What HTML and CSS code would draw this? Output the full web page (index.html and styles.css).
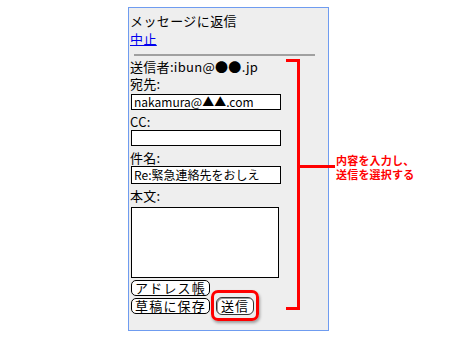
FILE: index.html
```html
<!DOCTYPE html>
<html lang="ja">
<head>
<meta charset="utf-8">
<link rel="stylesheet" href="styles.css">
</head>
<body>
<div class="stage">
  <div class="screen">
    <div class="title">メッセージに返信</div>
    <div class="line"><a class="link" href="#">中止</a></div>
    <div class="rule"></div>
    <div class="label">送信者:ibun@●●.jp</div>
    <div class="label">宛先:</div>
    <div class="field first">nakamura@▲▲.com</div>
    <div class="label">CC:</div>
    <div class="field"></div>
    <div class="label">件名:</div>
    <div class="field tall">Re:緊急連絡先をおしえ</div>
    <div class="label">本文:</div>
    <div class="area"></div>
    <div class="btnrow"><span class="btn">アドレス帳</span></div>
    <div class="btnrow second"><span class="btn">草稿に保存</span><span class="hl"><span class="btn send">送信</span></span></div>
  </div>
  <div class="bracket">
    <div class="tick top"></div>
    <div class="tick bottom"></div>
    <div class="arm"></div>
  </div>
  <div class="note">内容を入力し、<br>送信を選択する</div>
</div>
</body>
</html>
```
FILE: styles.css
```css
html, body { margin: 0; padding: 0; background: #fff; }
body { font-family: "Noto Sans CJK JP", "DejaVu Sans", sans-serif; }
.stage { position: relative; width: 450px; height: 340px; padding-top: 7px; box-sizing: border-box; }
.screen {
  margin-left: 128px;
  width: 198px;
  height: 318px;
  border: 1px solid #6f9cf0;
  background: #eeeeee;
  padding: 4px 0 0 1px;
  box-sizing: content-box;
  font-size: 13px;
  color: #000;
  overflow: hidden;
}
.title { height: 18px; line-height: 18px; letter-spacing: 0.4px; }
.line { height: 18px; line-height: 18px; }
.link { color: #0000ee; text-decoration: underline; letter-spacing: 0.4px; }
.rule { height: 2px; background: #a0a0a0; margin: 6px 13px 2px 4px; }
.label { height: 17px; line-height: 17px; letter-spacing: 0.3px; }
.field {
  width: 146px; height: 14px;
  border: 1px solid #000; background: #fff;
  margin: 0 0 3px 1px;
  font-size: 12px; line-height: 14px; padding-left: 2px; box-sizing: content-box;
  white-space: nowrap; overflow: hidden;
}
.field.first { margin-top: 2px; }
.field.tall { height: 16px; line-height: 16px; }
.area { width: 146px; height: 69px; border: 1px solid #000; background: #fff; margin: 3px 0 2px 1px; }
.btnrow { display: flex; align-items: flex-end; height: 16px; margin-left: 1px; }
.btnrow.second { height: 18px; }
.btn {
  display: inline-block; height: 14px; line-height: 14px;
  border: 1px solid #000; border-radius: 5px; background: #fff;
  padding: 0 3px; font-size: 13px; letter-spacing: 1.2px;
}
.hl {
  display: inline-block;
  margin: -5px 0 -7px 1px;
  padding: 4px 2px 3px 2px;
  border: 3px solid #f00; border-radius: 7px;
  box-shadow: 1px 2px 3px rgba(0,0,0,0.35);
  line-height: 0;
}
.send { height: 16px; line-height: 16px; border: 1px solid #333; border-radius: 6px; padding: 0 4px; letter-spacing: 1px; box-shadow: inset 1px 1px 0 #999; }
.bracket { position: absolute; left: 297px; top: 59px; width: 3px; height: 251px; background: #f00; }
.tick { position: absolute; right: 0; width: 14px; height: 3px; background: #f00; }
.tick.top { top: 0; }
.tick.bottom { bottom: 0; }
.arm { position: absolute; left: 0; top: 106px; width: 38px; height: 3px; background: #f00; }
.note { position: absolute; left: 336px; top: 153px; font-size: 11px; line-height: 14px; color: #f00; font-weight: 700; letter-spacing: 0.2px; white-space: nowrap; }
```
